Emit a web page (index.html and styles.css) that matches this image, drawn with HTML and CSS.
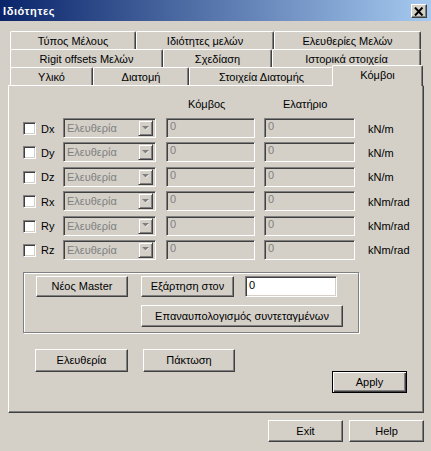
FILE: index.html
```html
<!DOCTYPE html>
<html>
<head>
<meta charset="utf-8">
<link rel="stylesheet" href="styles.css">
</head>
<body>
<div class="window">
  <div class="titlebar">
    <span class="title">Ιδιότητες</span>
    <div class="close"><svg width="10" height="9" viewBox="0 0 10 9"><path d="M1 0.5 L8.5 8.5 M8.5 0.5 L1 8.5" stroke="#000" stroke-width="2" fill="none"/></svg></div>
  </div>
  <div class="content">
    <div class="tabs">
      <div class="tabrow">
        <div class="tab w126">Τύπος Μέλους</div>
        <div class="tab w138">Ιδιότητες μελών</div>
        <div class="tab w147">Ελευθερίες Μελών</div>
      </div>
      <div class="tabrow">
        <div class="tab w153">Rigit offsets Μελών</div>
        <div class="tab w109">Σχεδίαση</div>
        <div class="tab w149">Ιστορικά στοιχεία</div>
      </div>
      <div class="tabrow">
        <div class="tab w83">Υλικό</div>
        <div class="tab w96">Διατομή</div>
        <div class="tab w145">Στοιχεία Διατομής</div>
        <div class="tab selected">Κόμβοι</div>
      </div>
    </div>
    <div class="panel">
      <div class="grid head">
        <span></span><span></span><span></span>
        <span class="hcell">Κόμβος</span>
        <span class="hcell">Ελατήριο</span>
      </div>
      <div class="rows">
        <div class="grid row">
          <span class="check"></span><span class="lbl">Dx</span>
          <div class="combo"><span>Ελευθερία</span><div class="drop"><svg width="7" height="5" viewBox="0 0 7 5"><path d="M1 1h6l-3 3z" fill="#fff"/><path d="M0 0h7l-3.5 3.5z" fill="#808080"/></svg></div></div>
          <div class="field f1">0</div><div class="field f2">0</div><span class="unit">kN/m</span>
        </div>
        <div class="grid row">
          <span class="check"></span><span class="lbl">Dy</span>
          <div class="combo"><span>Ελευθερία</span><div class="drop"><svg width="7" height="5" viewBox="0 0 7 5"><path d="M1 1h6l-3 3z" fill="#fff"/><path d="M0 0h7l-3.5 3.5z" fill="#808080"/></svg></div></div>
          <div class="field f1">0</div><div class="field f2">0</div><span class="unit">kN/m</span>
        </div>
        <div class="grid row">
          <span class="check"></span><span class="lbl">Dz</span>
          <div class="combo"><span>Ελευθερία</span><div class="drop"><svg width="7" height="5" viewBox="0 0 7 5"><path d="M1 1h6l-3 3z" fill="#fff"/><path d="M0 0h7l-3.5 3.5z" fill="#808080"/></svg></div></div>
          <div class="field f1">0</div><div class="field f2">0</div><span class="unit">kN/m</span>
        </div>
        <div class="grid row">
          <span class="check"></span><span class="lbl">Rx</span>
          <div class="combo"><span>Ελευθερία</span><div class="drop"><svg width="7" height="5" viewBox="0 0 7 5"><path d="M1 1h6l-3 3z" fill="#fff"/><path d="M0 0h7l-3.5 3.5z" fill="#808080"/></svg></div></div>
          <div class="field f1">0</div><div class="field f2">0</div><span class="unit">kNm/rad</span>
        </div>
        <div class="grid row">
          <span class="check"></span><span class="lbl">Ry</span>
          <div class="combo"><span>Ελευθερία</span><div class="drop"><svg width="7" height="5" viewBox="0 0 7 5"><path d="M1 1h6l-3 3z" fill="#fff"/><path d="M0 0h7l-3.5 3.5z" fill="#808080"/></svg></div></div>
          <div class="field f1">0</div><div class="field f2">0</div><span class="unit">kNm/rad</span>
        </div>
        <div class="grid row">
          <span class="check"></span><span class="lbl">Rz</span>
          <div class="combo"><span>Ελευθερία</span><div class="drop"><svg width="7" height="5" viewBox="0 0 7 5"><path d="M1 1h6l-3 3z" fill="#fff"/><path d="M0 0h7l-3.5 3.5z" fill="#808080"/></svg></div></div>
          <div class="field f1">0</div><div class="field f2">0</div><span class="unit">kNm/rad</span>
        </div>
      </div>
      <div class="group">
        <div class="grow1">
          <div class="btn b92">Νέος Master</div>
          <div class="btn b93">Εξάρτηση στον</div>
          <div class="input">0</div>
        </div>
        <div class="grow2">
          <div class="btn b202">Επαναυπολογισμός συντεταγμένων</div>
        </div>
      </div>
      <div class="lower">
        <div class="btn b93 tall">Ελευθερία</div>
        <div class="btn b92 tall">Πάκτωση</div>
      </div>
      <div class="applyrow">
        <div class="btn default">Apply</div>
      </div>
    </div>
    <div class="footer">
      <div class="btn b75">Exit</div>
      <div class="btn b75">Help</div>
    </div>
  </div>
</div>
</body>
</html>
```

FILE: styles.css
```css
* { box-sizing: border-box; }
html, body { margin: 0; padding: 0; }
body {
  background: #d4d0c8;
  font-family: "Liberation Sans", Arial, sans-serif;
  font-size: 11px;
  color: #000;
}
.window {
  width: 431px;
  height: 451px;
  background: #d4d0c8;
  overflow: hidden;
}
.titlebar {
  height: 21px;
  background: linear-gradient(to right, #0a246a, #a6caf0);
  display: flex;
  align-items: center;
  justify-content: space-between;
  padding: 0 4px 0 3px;
}
.title {
  color: #fff;
  font-weight: bold;
  font-size: 11px;
  letter-spacing: 0.6px;
  padding-top: 1px;
}
.close {
  width: 16px;
  height: 14px;
  background: #d4d0c8;
  border: 1px solid;
  border-color: #fff #404040 #404040 #fff;
  box-shadow: inset -1px -1px #808080;
  display: flex;
  align-items: center;
  justify-content: center;
  margin-top: 1px;
}
.content {
  padding: 10px 0 0 8px;
}
.tabs {
  margin-left: 2px;
}
.tabrow {
  display: flex;
  height: 18px;
}
.tab {
  height: 18px;
  border-top: 1px solid #fff;
  border-left: 1px solid #fff;
  border-right: 1px solid #404040;
  box-shadow: inset -1px 0 #808080;
  border-top-left-radius: 2px;
  border-top-right-radius: 2px;
  text-align: center;
  padding-top: 3px;
  line-height: 12px;
  white-space: nowrap;
  background: #d4d0c8;
}
.w126 { width: 126px; }
.w138 { width: 138px; }
.w147 { width: 147px; }
.w153 { width: 153px; }
.w109 { width: 109px; }
.w149 { width: 149px; }
.w83 { width: 83px; }
.w96 { width: 96px; }
.w145 { width: 145px; }
.tab.selected {
  width: 91px;
  height: 21px;
  margin: -2px 0 0 -2px;
  padding-top: 3px;
  position: relative;
  z-index: 1;
}
.panel {
  width: 416px;
  height: 328px;
  border: 1px solid;
  border-color: #fff #404040 #404040 #fff;
  box-shadow: inset -1px -1px #808080;
  padding: 12px 0 0 14px;
}
.grid {
  display: grid;
  grid-template-columns: 18px 22px 103px 98px 104px 1fr;
  align-items: center;
}
.head {
  height: 13px;
  line-height: 13px;
}
.hcell:nth-of-type(4) { padding-left: 22px; }
.hcell:nth-of-type(5) { padding-left: 19px; }
.rows {
  margin-top: 7px;
  display: flex;
  flex-direction: column;
  gap: 4.4px;
}
.row { height: 20px; }
.check {
  width: 13px;
  height: 13px;
  background: #fff;
  border: 1px solid;
  border-color: #808080 #fff #fff #808080;
  box-shadow: inset 1px 1px #404040, inset -1px -1px #d4d0c8;
  margin-top: 1px;
}
.lbl { padding-top: 1px; }
.combo {
  width: 93px;
  height: 20px;
  border: 1px solid;
  border-color: #808080 #fff #fff #808080;
  box-shadow: inset 1px 1px #404040, inset -1px -1px #d4d0c8;
  display: flex;
  align-items: center;
  justify-content: space-between;
  padding: 1px 2px 1px 3px;
  color: #808080;
}
.drop {
  width: 15px;
  height: 16px;
  border: 1px solid;
  border-color: #d4d0c8 #404040 #404040 #d4d0c8;
  box-shadow: inset 1px 1px #fff, inset -1px -1px #808080;
  display: flex;
  align-items: center;
  justify-content: center;
}
.field {
  height: 20px;
  border: 1px solid;
  border-color: #808080 #fff #fff #808080;
  box-shadow: inset 1px 1px #404040, inset -1px -1px #d4d0c8;
  color: #808080;
  padding: 1px 0 0 3px;
  line-height: 13px;
}
.f1 { width: 89px; }
.f2 { width: 91px; }
.unit { padding-top: 1px; }
.group {
  margin-top: 12px;
  width: 336px;
  height: 61px;
  border: 1px solid #808080;
  box-shadow: 1px 1px 0 #fff, inset 1px 1px 0 #fff;
  padding: 3px 0 0 12px;
}
.grow1 {
  display: flex;
  height: 21px;
}
.grow1 .b92 { margin-right: 13px; }
.grow1 .b93 { margin-right: 11px; }
.btn {
  height: 21px;
  border: 1px solid;
  border-color: #fff #404040 #404040 #fff;
  box-shadow: inset -1px -1px #808080;
  display: flex;
  align-items: center;
  justify-content: center;
  white-space: nowrap;
  background: #d4d0c8;
}
.b92 { width: 92px; }
.b93 { width: 93px; }
.b75 { width: 75px; height: 22px; }
.b202 { width: 202px; height: 22px; }
.input {
  width: 92px;
  height: 21px;
  background: #fff;
  border: 1px solid;
  border-color: #808080 #fff #fff #808080;
  box-shadow: inset 1px 1px #404040, inset -1px -1px #d4d0c8;
  padding: 2px 0 0 3px;
}
.grow2 {
  margin: 8px 0 0 105px;
}
.lower {
  margin: 16px 0 0 12px;
  display: flex;
  gap: 15px;
}
.tall { height: 23px; }
.applyrow {
  margin: -1px 0 0 309px;
}
.btn.default {
  width: 75px;
  height: 22px;
  border: 1px solid #000;
  box-shadow: inset 1px 1px #fff, inset -1px -1px #404040, inset -2px -2px #808080;
}
.footer {
  margin-top: 7px;
  display: flex;
  gap: 6px;
  padding-left: 260px;
}
```
